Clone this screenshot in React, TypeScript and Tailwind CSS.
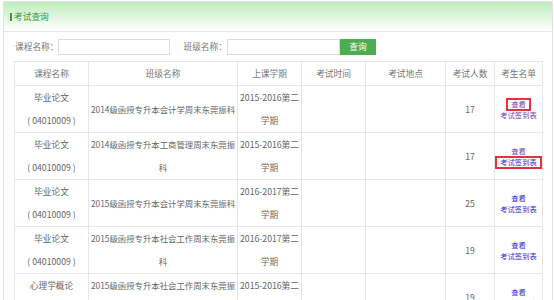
import React from 'react'

type Row = {
  course: string
  code: string
  className: string
  term: string
  count: number
  viewBox?: boolean
  signBox?: boolean
  viewVisited?: boolean
  signVisited?: boolean
}

const rows: Row[] = [
  {
    course: '毕业论文',
    code: '( 04010009 )',
    className: '2014级函授专升本会计学周末东莞振科',
    term: '2015-2016第二学期',
    count: 17,
    viewBox: true,
    viewVisited: true,
    signVisited: true,
  },
  {
    course: '毕业论文',
    code: '( 04010009 )',
    className: '2014级函授专升本工商管理周末东莞振科',
    term: '2015-2016第二学期',
    count: 17,
    signBox: true,
    viewVisited: true,
  },
  {
    course: '毕业论文',
    code: '( 04010009 )',
    className: '2015级函授专升本会计学周末东莞振科',
    term: '2016-2017第二学期',
    count: 25,
  },
  {
    course: '毕业论文',
    code: '( 04010009 )',
    className: '2015级函授专升本社会工作周末东莞振科',
    term: '2016-2017第二学期',
    count: 19,
  },
  {
    course: '心理学概论',
    code: '( 04010021 )',
    className: '2015级函授专升本社会工作周末东莞振科',
    term: '2015-2016第二学期',
    count: 19,
  },
]

const headers = ['课程名称', '班级名称', '上课学期', '考试时间', '考试地点', '考试人数', '考生名单']
const widths = ['w-[74px]', 'w-[149px]', 'w-[64px]', 'w-[64px]', 'w-[80px]', 'w-[49px]', 'w-[48px]']

const Link = ({ text, visited, boxed }: { text: string; visited?: boolean; boxed?: boolean }) => (
  <span className={`relative inline-block ${visited ? 'text-[#6a48b0]' : 'text-[#2f2fd8]'}`}>
    {text}
    {boxed && <span className="absolute -inset-x-[5px] -inset-y-[1px] border-2 border-[#e8323a]" />}
  </span>
)

export default function App() {
  return (
    <div className="h-[300px] w-[554px] overflow-hidden bg-white font-['Noto_Sans_CJK_SC','Noto_Sans',sans-serif] text-[8.7px] text-[#666]">
      <div className="ml-[3px] mt-[1px] w-[550px] border border-[#e3e3e3]">
        <div className="flex h-[30px] items-center border-b border-[#e6e6e6] bg-linear-to-b from-[#bdedbd] to-white pl-[6px]">
          <span className="mr-[2px] h-[8px] w-[2px] bg-[#3a9a3a]" />
          <span className="text-[#3a9a3a]">考试查询</span>
        </div>

        <div className="ml-[11px] mt-[7px] flex h-[16px] items-center">
          <span className="text-[#777]">课程名称：</span>
          <input className="h-[16px] w-[112px] border border-[#dcdcdc] bg-white outline-none" />
          <span className="ml-[13px] text-[#777]">班级名称：</span>
          <input className="h-[16px] w-[113px] border border-[#dcdcdc] bg-white outline-none" />
          <button
            type="button"
            className="h-[16px] w-[36px] bg-[#4cae50] text-center text-[8.7px] leading-[16px] text-white"
          >
            查询
          </button>
        </div>

        <table className="mb-[10px] ml-[10px] mt-[6px] w-[528px] table-fixed border-collapse">
          <thead>
            <tr className="h-[24px]">
              {headers.map((h, i) => (
                <th key={h} className={`${widths[i]} border border-[#e6e6e6] p-0 text-center font-normal text-[#777]`}>
                  {h}
                </th>
              ))}
            </tr>
          </thead>
          <tbody>
            {rows.map((row, idx) => (
              <tr key={idx} className="h-[47px] leading-[23px]">
                <td className="border border-[#e6e6e6] p-0 text-center">
                  <div>{row.course}</div>
                  <div className="whitespace-pre">{row.code}</div>
                </td>
                <td className="border border-[#e6e6e6] p-0 text-center text-[8.4px]">{row.className}</td>
                <td className="border border-[#e6e6e6] p-0 text-center">{row.term}</td>
                <td className="border border-[#e6e6e6] p-0" />
                <td className="border border-[#e6e6e6] p-0" />
                <td className="border border-[#e6e6e6] p-0 text-center">{row.count}</td>
                <td className="border border-[#e6e6e6] p-0 pt-[2px] text-center text-[7.3px] leading-[11px]">
                  <div>
                    <Link text="查看" visited={row.viewVisited} boxed={row.viewBox} />
                  </div>
                  <div>
                    <Link text="考试签到表" visited={row.signVisited} boxed={row.signBox} />
                  </div>
                </td>
              </tr>
            ))}
          </tbody>
        </table>
      </div>
    </div>
  )
}
